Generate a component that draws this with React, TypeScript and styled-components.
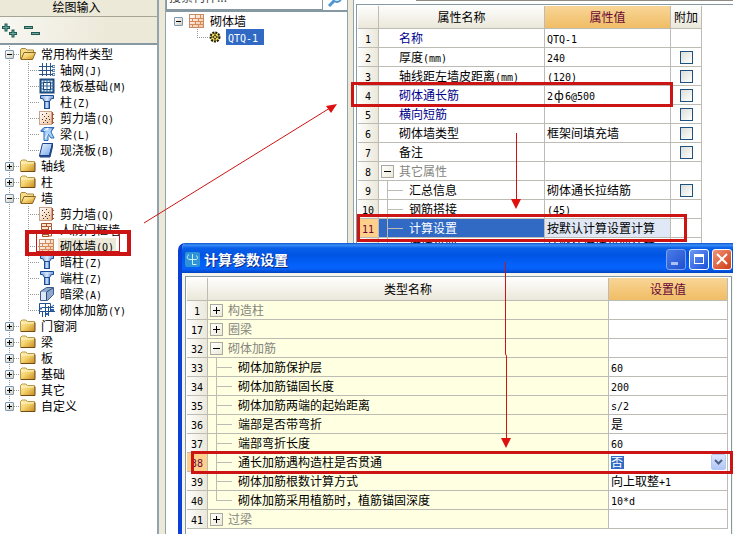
import React from 'react';
import styled, { createGlobalStyle, css } from 'styled-components';

const Global = createGlobalStyle`
  *, *::before, *::after { box-sizing: border-box; }
  body {
    margin: 0;
    overflow: hidden;
    background: #ece9d8;
    color: #000;
    font-family: "Noto Sans CJK SC", sans-serif;
    font-size: 12px;
    line-height: 16px;
  }
  button, input, select { font: inherit; margin: 0; padding: 0; }
`;

/* ---------- text ---------- */

const Half = styled.span`
  font-family: "DejaVu Sans Mono", monospace;
  font-size: 10px;
  line-height: 0;
`;

const Bar = styled.span`
  display: inline-block;
  width: 12px;
  text-align: center;
`;

function Txt({ children }: { children: string }) {
  return (
    <>
      {children.split(/([\x20-\x7e]+|ф)/).map((part, i) => {
        if (part === 'ф') return <Bar key={i}>ф</Bar>;
        return /^[\x20-\x7e]+$/.test(part) ? <Half key={i}>{part}</Half> : part;
      })}
    </>
  );
}

/* ---------- icons ---------- */

const Svg = ({ children, w = 16, h = 16 }: { children: React.ReactNode; w?: number; h?: number }) => (
  <svg width={w} height={h} viewBox={`0 0 ${w} ${h}`} aria-hidden="true">
    {children}
  </svg>
);

const Gradients = () => (
  <svg width="0" height="0" aria-hidden="true" display="block">
    <defs>
      <linearGradient id="gold" x1="0" y1="0" x2="1" y2="1">
        <stop offset="0" stopColor="#fff3b8" />
        <stop offset="0.5" stopColor="#f2cf6a" />
        <stop offset="1" stopColor="#c98a1c" />
      </linearGradient>
      <linearGradient id="steel" x1="0" y1="0" x2="1" y2="0">
        <stop offset="0" stopColor="#3f7fd0" />
        <stop offset="0.5" stopColor="#dcecff" />
        <stop offset="1" stopColor="#2b5cae" />
      </linearGradient>
      <linearGradient id="sheet" x1="0" y1="0" x2="1" y2="1">
        <stop offset="0" stopColor="#f2f8ff" />
        <stop offset="1" stopColor="#6fa4e6" />
      </linearGradient>
      <linearGradient id="clay" x1="0" y1="0" x2="1" y2="1">
        <stop offset="0" stopColor="#ffffff" />
        <stop offset="1" stopColor="#f3bf96" />
      </linearGradient>
    </defs>
  </svg>
);

const FolderIcon = () => (
  <Svg>
    <path d="M.5 3.500 2 2h4l1.500 1.500h7v10H.5z" fill="url(#gold)" stroke="#b99a4a" />
    <path d="M1 5h13" stroke="#fff6cf" />
    <path d="M1 13.500h14V4.500" fill="none" stroke="#6d4b12" />
  </Svg>
);
const FolderOpenIcon = () => (
  <Svg>
    <path d="M.5 13V4l1-1.500h4L7 4h6.500v3" fill="#f6dd8c" stroke="#a98536" />
    <path d="M1 13.500 4 6.500h11.500l-3 7z" fill="url(#gold)" stroke="#8a6420" />
  </Svg>
);
const GridIcon = () => (
  <Svg>
    <path d="M3.500 1v13M7.500 1v13M11.500 1v13M0 4.500h14M0 8.500h14M0 12.500h14" stroke="#2c5584" fill="none" />
    <path d="M13 3.500h3v2h-3M13 7.500h3v2h-3M13 11.500h3v2h-3" stroke="#5f86b0" fill="none" />
  </Svg>
);
const RaftIcon = () => (
  <Svg>
    <rect x="1.500" y="1.500" width="13" height="13" fill="#dcebfa" stroke="#1c4878" strokeWidth="2" />
    <rect x="4.500" y="4.500" width="7" height="7" fill="#fff" stroke="#1c4878" />
    <path d="M8 1v14M1 8h14M1 5h3M12 5h3M1 11h3M12 11h3M5 1v3M11 1v3M5 12v3M11 12v3" stroke="#2b639c" />
  </Svg>
);
const ColumnIcon = () => (
  <Svg>
    <path d="M1.500 1.500h13v3h-2l-2 3h-5l-2-3h-2z" fill="url(#steel)" stroke="#1d4a94" />
    <rect x="5.500" y="7.500" width="5" height="7" fill="url(#steel)" stroke="#1d4a94" />
    <path d="M2 3h12" stroke="#cfe2fb" />
  </Svg>
);
const ConcreteIcon = () => (
  <Svg>
    <rect x=".5" y="1.500" width="12" height="13" fill="url(#clay)" stroke="#c9a48c" />
    <path d="M3 4.500h1M7 3.500h1M5 6.500h1M9 6.500h1M3 9.500h1M6 10.500h1M10 9.500h1M4 12.500h1M8 12.500h1M7 8.500h1" stroke="#333" />
    <path d="M13.500 2v12M14 4.500h1M14 8.500h1M14 12.500h1" stroke="#a3542c" />
  </Svg>
);
const BeamIcon = () => (
  <Svg>
    <path d="M2 4.500 5 1.500h10l-3 4H2z" fill="url(#steel)" stroke="#2a6ab8" />
    <path d="M5 6v8.500h4V8l3 4h3L12 6l2-4" fill="#a9d2fa" stroke="#2a6ab8" />
    <path d="m5 5 4-3M6 12l3-4" stroke="#fff" />
  </Svg>
);
const SlabIcon = () => (
  <Svg>
    <path d="M3.500 1.500h10l-3 12h-10z" fill="url(#sheet)" stroke="#1f4590" />
    <path d="M13.500 1.500v3l-2.500 10.500H1l-.5-1.500h10z" fill="#2b5cae" stroke="#1f3f80" />
  </Svg>
);
const DoorWallIcon = () => (
  <Svg>
    <path d="M2.500 1.500h10v3h-3v10h-6v-4h2v-3h-3z" fill="#fbe3cd" stroke="#a5532c" />
    <path d="M3 4.500h6M6 7.500h4M7.500 1.500v3M4 12.500h5M12.500 5v9h-3" fill="none" stroke="#a5532c" />
  </Svg>
);
const BrickIcon = () => (
  <Svg>
    <rect x=".5" y="1.500" width="14" height="13" fill="url(#clay)" stroke="#c58a66" />
    <path d="M1 5.500h13M1 8.500h13M1 11.500h13M6.500 2v3M11.500 2v3M3.500 6v2M9.500 6v2M6.500 9v2M11.500 9v2M3.500 12v2M9.500 12v2" stroke="#d58a5c" />
  </Svg>
);
const HiddenBeamIcon = () => (
  <Svg>
    <path d="m1.500 5.500 6-4h7v7l-6 6h-7z" fill="#8fa9cc" stroke="#3c5c8c" />
    <path d="M2 6h5v8H2z" fill="#dfe9f6" />
    <path d="M7.500 6 14 2M7.500 6v8" stroke="#2f4e80" />
  </Svg>
);
const RebarIcon = () => (
  <Svg>
    <path d="M.5 12V1.500h11v8h-8V15M6.500 1v14M0 9.500h16M9.500 4v10M3 5.500h12M15 3l-4 3" fill="none" stroke="#23508e" />
    <path d="M1 6.500h2M7 12h2M12 8h3" stroke="#2b66b8" strokeWidth="2" />
  </Svg>
);
const GearIcon = () => (
  <Svg>
    <circle cx="8" cy="8" r="4.500" fill="#f4e05a" stroke="#1d1a08" strokeDasharray="2 1" strokeWidth="2" />
    <path d="M8 4v8M4 8h8" stroke="#3c3408" />
    <circle cx="8" cy="8" r="1.500" fill="#fff6a0" stroke="#3c3408" />
  </Svg>
);
const SearchIcon = () => (
  <Svg>
    <circle cx="10" cy="6" r="4" fill="#d8ecfb" stroke="#4f97d2" strokeWidth="2" />
    <path d="m7 9-5 5" stroke="#4f97d2" strokeWidth="3" />
  </Svg>
);

/* ---------- page frame ---------- */

const Screen = styled.main`
  position: relative;
  display: flex;
  height: 100vh;
  overflow: hidden;
`;

const Sidebar = styled.section`
  flex: 0 0 159px;
  display: flex;
  flex-direction: column;
  margin-right: 6px;
  border-right: 2px solid #91a4ae;
`;

const SideTitle = styled.h2`
  margin: 0;
  height: 17px;
  padding-right: 4px;
  border-bottom: 1px solid #a5a596;
  font-size: 12px;
  font-weight: 400;
  line-height: 13px;
  text-align: center;
`;

const Toolbar = styled.div`
  display: flex;
  align-items: center;
  gap: 6px;
  height: 26px;
  padding-left: 1px;
  background: linear-gradient(100deg, #f8f7f2, #ece9d8 70%);
`;

const ToolButton = styled.button`
  width: 17px;
  height: 17px;
  border: 0;
  background: none;
  line-height: 0;
`;

const Tree = styled.ul`
  flex: 1;
  margin: 0;
  padding: 1px 0 0;
  border-top: 2px solid #8699a3;
  background: #fff;
  list-style: none;
`;

const vDots = 'repeating-linear-gradient(#999 0 1px, transparent 1px 2px)';
const hDots = 'repeating-linear-gradient(90deg, #999 0 1px, transparent 1px 2px)';

const TreeRow = styled.li<{ $kind: 'folder' | 'leaf' | 'lastLeaf' | 'lastFolder' }>`
  display: flex;
  align-items: center;
  height: 16px;
  white-space: nowrap;
  background-repeat: no-repeat;
  ${p => (p.$kind === 'folder' || p.$kind === 'lastFolder') && css`
    padding-left: 5px;
    background-image: ${vDots}, ${hDots};
    background-position: 9px 0, 14px 8px;
    background-size: 1px ${p.$kind === 'folder' ? '100%' : '8px'}, 6px 1px;
  `}
  ${p => (p.$kind === 'leaf' || p.$kind === 'lastLeaf') && css`
    padding-left: 39px;
    background-image: ${vDots}, ${vDots}, ${hDots};
    background-position: 9px 0, 28px 0, 28px 8px;
    background-size: 1px 100%, 1px ${p.$kind === 'leaf' ? '100%' : '8px'}, 11px 1px;
  `}
`;

const ItemRow = styled.li<{ $child?: boolean }>`
  display: flex;
  align-items: center;
  height: 16px;
  padding-left: ${p => (p.$child ? 41 : 8)}px;
  background-repeat: no-repeat;
  ${p => p.$child && css`
    background-image: ${vDots}, ${hDots};
    background-position: 31px 0, 31px 8px;
    background-size: 1px 8px, 11px 1px;
  `}
`;

const Expander = styled.button`
  flex: none;
  width: 9px;
  height: 9px;
  margin-right: 6px;
  border: 1px solid #7b97b5;
  border-radius: 1px;
  background: linear-gradient(135deg, #fff, #d5cfc0);
  line-height: 0;
`;

const IconSlot = styled.span`
  flex: none;
  width: 16px;
  height: 16px;
  line-height: 0;
`;

const Label = styled.span<{ $tone?: 'soft' | 'selected' }>`
  height: 16px;
  margin-left: 3px;
  padding: 0 2px;
  line-height: 16px;
  ${p => p.$tone === 'soft' && css`background: #ece9d8;`}
  ${p => p.$tone === 'selected' && css`
    padding-right: 6px;
    background: #316ac5;
    color: #fff;
  `}
`;

function Expand({ open, name }: { open?: boolean; name: string }) {
  return (
    <Expander aria-label={name} aria-expanded={!!open}>
      <Svg w={7} h={7}>
        <path d={open ? 'M1 3.500h5' : 'M1 3.500h5M3.500 1v5'} stroke="#000" />
      </Svg>
    </Expander>
  );
}

const Items = styled.section`
  flex: 0 0 183px;
  display: flex;
  flex-direction: column;
  margin-right: 5px;
  border: solid #91a4ae;
  border-width: 0 1px;
  background: #fff;
`;

const SearchBar = styled.form`
  display: flex;
  align-items: flex-end;
  height: 10px;
  overflow: hidden;
`;

const SearchInput = styled.input`
  flex: 1;
  min-width: 0;
  height: 28px;
  padding: 0 2px;
  border: 1px solid #8699a3;
  background: #fff;
  &::placeholder { color: #444; opacity: 1; }
`;

const SearchButton = styled.button`
  width: 24px;
  height: 20px;
  border: 0;
  background: none;
  line-height: 0;
`;

/* ---------- property grids ---------- */

const PropertyPane = styled.section`
  flex: 1;
  padding: 4px 0 0 2px;
  border-left: 1px solid #91a4ae;
  background: linear-gradient(#8c8c84, #8c8c84) 62px 0 / 100% 1px no-repeat #fff;
`;

const Frame = styled.div<{ $closed?: boolean }>`
  flex: 1;
  padding: 1px ${p => (p.$closed ? 3 : 0)}px 0 1px;
  border: solid #8699a3;
  border-width: 1px ${p => (p.$closed ? 1 : 0)}px 0 1px;
  background: #fff;
`;

const Grid = styled.table<{ $fill?: boolean }>`
  width: ${p => (p.$fill ? '100%' : '344px')};
  border-spacing: 0;
  table-layout: fixed;
`;

const Col = styled.col<{ $w?: number }>`
  width: ${p => (p.$w ? `${p.$w}px` : 'auto')};
`;

const Head = styled.th<{ $hot?: boolean }>`
  height: 23px;
  padding: 0;
  border: solid #bcbcb4;
  border-width: 0 1px 1px 0;
  background: ${p => (p.$hot ? 'linear-gradient(#f8d596, #f0bd65)' : 'linear-gradient(#fdfdfb, #ebe8da)')};
  color: ${p => (p.$hot ? '#6a0836' : '#000')};
  font-weight: 400;
  line-height: 22px;
  white-space: nowrap;
`;

const RowNo = styled.th<{ $hot?: boolean }>`
  height: 19px;
  padding: 0;
  border: solid #bcbcb4;
  border-width: 0 1px 1px 0;
  background: ${p => (p.$hot ? '#ffcf8c' : 'linear-gradient(90deg, #fdfdfb, #ebe8da)')};
  color: ${p => (p.$hot ? '#6a0836' : '#000')};
  font-weight: 400;
  line-height: 18px;
`;

type Tone = 'plain' | 'cream' | 'active' | 'pale';
const fills: Record<Tone, string> = { plain: '#fff', cream: '#ffffe1', active: '#316ac5', pale: '#e1e8f5' };

const Cell = styled.td<{ $tone?: Tone; $ink?: string; $pad?: number }>`
  height: 19px;
  padding: 0 0 0 ${p => p.$pad ?? 2}px;
  border: solid #bcbcb4;
  border-width: 0 1px 1px 0;
  background: ${p => fills[p.$tone ?? 'plain']};
  color: ${p => p.$ink ?? '#000'};
  line-height: 18px;
  white-space: nowrap;
`;

const NameLine = styled.div`
  display: flex;
  align-items: center;
  height: 18px;
`;

const Lead = styled.span`
  display: flex;
  flex: 0 0 20px;
  padding-left: 2px;
`;

const Branch = styled.span<{ $last?: boolean }>`
  flex: 0 0 30px;
  height: 18px;
  background-image: linear-gradient(#bcbcb4, #bcbcb4), linear-gradient(#bcbcb4, #bcbcb4);
  background-repeat: no-repeat;
  background-position: 8px 0, 8px 9px;
  background-size: 1px ${p => (p.$last ? '9px' : '100%')}, 16px 1px;
`;

const GridToggle = styled.button`
  width: 13px;
  height: 13px;
  border: 1px solid #a9a9a0;
  background: linear-gradient(135deg, #fff, #ece9d8);
  line-height: 0;
`;

const Check = styled.input`
  display: block;
  appearance: none;
  width: 13px;
  height: 13px;
  margin: 0 auto;
  border: 1px solid #1c5180;
  background: linear-gradient(135deg, #dcdcd7, #fff);
`;

interface RowData {
  no: number;
  name: string;
  value?: string;
  kind?: 'open' | 'closed' | 'child' | 'last';
  blue?: boolean;
  check?: boolean;
  active?: boolean;
}

function Name({ row }: { row: RowData }) {
  const group = row.kind === 'open' || row.kind === 'closed';
  const child = row.kind === 'child' || row.kind === 'last';
  return (
    <NameLine>
      {child ? (
        <Branch $last={row.kind === 'last'} />
      ) : (
        <Lead>
          {group && (
            <GridToggle aria-label={row.name} aria-expanded={row.kind === 'open'}>
              <Svg w={11} h={11}>
                <path d={row.kind === 'open' ? 'M2 5.500h7' : 'M2 5.500h7M5.500 2v7'} stroke="#000" />
              </Svg>
            </GridToggle>
          )}
        </Lead>
      )}
      <span><Txt>{row.name}</Txt></span>
    </NameLine>
  );
}

const nameInk = (r: RowData) =>
  r.kind === 'open' || r.kind === 'closed' ? '#85857e' : r.blue ? '#00008c' : '#000';

/* ---------- dialog ---------- */

const Dialog = styled.section`
  position: absolute;
  inset: 243px 0 0 178px;
  display: flex;
  flex-direction: column;
  border-left: 4px solid #0a3fd8;
  border-radius: 7px 0 0 0;
  background: #f4f3ec;
  overflow: hidden;
`;

const TitleBar = styled.header`
  display: flex;
  align-items: center;
  flex: none;
  height: 30px;
  gap: 3px;
  padding: 2px 1px 0 2px;
  background: linear-gradient(#0a4fd0, #3d8ff5 2px, #0a5fe8 5px, #0054e3 12px, #0462fb 22px, #0560f8 26px, #0043c0);
`;

const Title = styled.h1`
  flex: 1;
  margin: 0 0 0 1px;
  color: #fff;
  font-size: 14px;
  font-weight: 700;
  line-height: 20px;
  text-shadow: 1px 1px #0a2a80;
`;

const CaptionButton = styled.button<{ $variant: 'dim' | 'blue' | 'red' }>`
  width: 20px;
  height: 21px;
  border: 1px solid ${p => (p.$variant === 'dim' ? '#7fa2ee' : '#fff')};
  border-radius: 3px;
  background: ${p => ({
    dim: 'linear-gradient(135deg, #4a7cea, #1f4fcd)',
    blue: 'linear-gradient(135deg, #6b98f4, #1c50d8)',
    red: 'linear-gradient(135deg, #f0957a, #cf3c14)',
  })[p.$variant]};
  line-height: 0;
`;

const DialogBody = styled.div`
  display: flex;
  flex: 1;
  padding: 3px 1px 0 3px;
`;

const Combo = styled.div`
  display: grid;
  grid-template-columns: 1fr 16px;
  align-items: center;
  height: 18px;
`;

const ComboSelect = styled.select`
  grid-area: 1 / 1 / 2 / 3;
  appearance: none;
  width: 100%;
  height: 18px;
  border: 0;
  border-radius: 0;
  background: linear-gradient(#316ac5, #316ac5) 0 3px / 13px 13px no-repeat;
  color: #fff;
  line-height: 18px;
  option { color: #000; }
`;

const ComboArrow = styled.span`
  grid-area: 1 / 2 / 2 / 3;
  width: 15px;
  height: 16px;
  border: 1px solid #b4c8f6;
  border-radius: 2px;
  background: linear-gradient(#dce6fd, #b2c6f6);
  line-height: 0;
  pointer-events: none;
`;

const Marks = styled.svg`
  position: absolute;
  top: 0;
  left: 0;
  pointer-events: none;
`;

/* ---------- data ---------- */

type Node = { label: string; icon?: () => React.JSX.Element; open?: boolean; soft?: boolean; last?: boolean };

const nodes: Node[] = [
  { label: '常用构件类型', open: true },
  { label: '轴网(J)', icon: GridIcon },
  { label: '筏板基础(M)', icon: RaftIcon },
  { label: '柱(Z)', icon: ColumnIcon },
  { label: '剪力墙(Q)', icon: ConcreteIcon },
  { label: '梁(L)', icon: BeamIcon },
  { label: '现浇板(B)', icon: SlabIcon, last: true },
  { label: '轴线' },
  { label: '柱' },
  { label: '墙', open: true },
  { label: '剪力墙(Q)', icon: ConcreteIcon },
  { label: '人防门框墙', icon: DoorWallIcon },
  { label: '砌体墙(Q)', icon: BrickIcon, soft: true },
  { label: '暗柱(Z)', icon: ColumnIcon },
  { label: '端柱(Z)', icon: ColumnIcon },
  { label: '暗梁(A)', icon: HiddenBeamIcon },
  { label: '砌体加筋(Y)', icon: RebarIcon, last: true },
  { label: '门窗洞' },
  { label: '梁' },
  { label: '板' },
  { label: '基础' },
  { label: '其它' },
  { label: '自定义', last: true },
];

const properties: RowData[] = [
  { no: 1, name: '名称', value: 'QTQ-1', blue: true },
  { no: 2, name: '厚度(mm)', value: '240', check: true },
  { no: 3, name: '轴线距左墙皮距离(mm)', value: '(120)', check: true },
  { no: 4, name: '砌体通长筋', value: '2ф6@500', blue: true, check: true },
  { no: 5, name: '横向短筋', blue: true, check: true },
  { no: 6, name: '砌体墙类型', value: '框架间填充墙', check: true },
  { no: 7, name: '备注', check: true },
  { no: 8, name: '其它属性', kind: 'open' },
  { no: 9, name: '汇总信息', value: '砌体通长拉结筋', kind: 'child', check: true },
  { no: 10, name: '钢筋搭接', value: '(45)', kind: 'child' },
  { no: 11, name: '计算设置', value: '按默认计算设置计算', kind: 'child', active: true },
  { no: 12, name: '搭接设置', value: '按默认搭接设置计算', kind: 'last' },
];

const settings: RowData[] = [
  { no: 1, name: '构造柱', kind: 'closed' },
  { no: 17, name: '圈梁', kind: 'closed' },
  { no: 32, name: '砌体加筋', kind: 'open' },
  { no: 33, name: '砌体加筋保护层', value: '60', kind: 'child' },
  { no: 34, name: '砌体加筋锚固长度', value: '200', kind: 'child' },
  { no: 35, name: '砌体加筋两端的起始距离', value: 's/2', kind: 'child' },
  { no: 36, name: '端部是否带弯折', value: '是', kind: 'child' },
  { no: 37, name: '端部弯折长度', value: '60', kind: 'child' },
  { no: 38, name: '通长加筋遇构造柱是否贯通', value: '否', kind: 'child', active: true },
  { no: 39, name: '砌体加筋根数计算方式', value: '向上取整+1', kind: 'child' },
  { no: 40, name: '砌体加筋采用植筋时，植筋锚固深度', value: '10*d', kind: 'last' },
  { no: 41, name: '过梁', kind: 'closed' },
];

export default function App() {
  return (
    <Screen>
      <Global />
      <Sidebar>
        <SideTitle>绘图输入</SideTitle>
        <Toolbar>
          <ToolButton aria-label="全部展开">
            <Svg w={17} h={17}>
              <path d="M1 5.500h8M5 1.500v8M8 11.500h8M12 7.500v8" stroke="#1f5a52" strokeWidth="3" />
              <path d="M2 5.500h6M5 2.500v6M9 11.500h6M12 8.500v6" stroke="#6fa79c" />
            </Svg>
          </ToolButton>
          <ToolButton aria-label="全部折叠">
            <Svg w={17} h={17}>
              <path d="M0 5.500h9M7 11.500h9" stroke="#1f5a52" strokeWidth="3" />
              <path d="M1 5.500h7M8 11.500h7" stroke="#6fa79c" />
            </Svg>
          </ToolButton>
        </Toolbar>
        <Tree>
          {nodes.map((n, i) => {
            const Icon = n.icon ?? (n.open ? FolderOpenIcon : FolderIcon);
            const kind = n.icon ? (n.last ? 'lastLeaf' : 'leaf') : n.last ? 'lastFolder' : 'folder';
            return (
              <TreeRow key={i} $kind={kind}>
                {!n.icon && <Expand open={n.open} name={n.label} />}
                <IconSlot><Icon /></IconSlot>
                <Label $tone={n.soft ? 'soft' : undefined}><Txt>{n.label}</Txt></Label>
              </TreeRow>
            );
          })}
        </Tree>
      </Sidebar>

      <Items>
        <SearchBar>
          <SearchInput aria-label="搜索构件" placeholder="搜索构件..." />
          <SearchButton type="button" aria-label="搜索"><SearchIcon /></SearchButton>
        </SearchBar>
        <Tree>
          <ItemRow>
            <Expand open name="砌体墙" />
            <IconSlot><BrickIcon /></IconSlot>
            <Label>砌体墙</Label>
          </ItemRow>
          <ItemRow $child>
            <IconSlot><GearIcon /></IconSlot>
            <Label $tone="selected"><Txt>QTQ-1</Txt></Label>
          </ItemRow>
        </Tree>
      </Items>

      <PropertyPane>
        <Frame>
          <Grid>
            <colgroup><Col $w={21} /><Col $w={166} /><Col $w={126} /><Col $w={31} /></colgroup>
            <thead>
              <tr><Head /><Head>属性名称</Head><Head $hot>属性值</Head><Head>附加</Head></tr>
            </thead>
            <tbody>
              {properties.map(r => (
                <tr key={r.no}>
                  <RowNo scope="row" $hot={r.active}><Txt>{String(r.no)}</Txt></RowNo>
                  <Cell $pad={0} $tone={r.active ? 'active' : 'plain'} $ink={r.active ? '#fff' : nameInk(r)}>
                    <Name row={r} />
                  </Cell>
                  <Cell $tone={r.active ? 'pale' : 'plain'}><Txt>{r.value ?? ''}</Txt></Cell>
                  <Cell $pad={0}>{r.check && <Check type="checkbox" aria-label={`${r.name} 附加`} />}</Cell>
                </tr>
              ))}
            </tbody>
          </Grid>
        </Frame>
      </PropertyPane>

      <Dialog role="dialog" aria-label="计算参数设置">
        <TitleBar>
          <IconSlot>
            <Svg>
              <rect x="1" y="1" width="15" height="15" rx="2" fill="#2f93d8" />
              <path d="M8.500 3v10.500M5 3.500c-3 2-2 5 1 5h6c2 0 2-3 0-4M8.500 13.500h4" fill="none" stroke="#c9f1fb" />
            </Svg>
          </IconSlot>
          <Title>计算参数设置</Title>
          <CaptionButton $variant="dim" aria-label="最小化">
            <Svg w={18} h={18}><path d="M4 13.500h7" stroke="#a9c1f6" strokeWidth="3" /></Svg>
          </CaptionButton>
          <CaptionButton $variant="blue" aria-label="最大化">
            <Svg w={18} h={18}>
              <rect x="4.500" y="4.500" width="9" height="9" fill="none" stroke="#fff" />
              <path d="M4 5.500h10" stroke="#fff" strokeWidth="3" />
            </Svg>
          </CaptionButton>
          <CaptionButton $variant="red" aria-label="关闭">
            <Svg w={18} h={18}><path d="m4 4 10 10M14 4 4 14" stroke="#fff" strokeWidth="2" /></Svg>
          </CaptionButton>
        </TitleBar>
        <DialogBody>
          <Frame $closed>
            <Grid $fill>
              <colgroup><Col $w={21} /><Col /><Col $w={119} /></colgroup>
              <thead>
                <tr><Head /><Head>类型名称</Head><Head $hot>设置值</Head></tr>
              </thead>
              <tbody>
                {settings.map(r => (
                  <tr key={r.no}>
                    <RowNo scope="row" $hot={r.active}><Txt>{String(r.no)}</Txt></RowNo>
                    <Cell $pad={0} $tone="cream" $ink={nameInk(r)}><Name row={r} /></Cell>
                    <Cell>
                      {r.active ? (
                        <Combo>
                          <ComboSelect aria-label={r.name} defaultValue="否">
                            <option>是</option>
                            <option>否</option>
                          </ComboSelect>
                          <ComboArrow>
                            <Svg w={13} h={14}><path d="m3 5 3.500 3.500L10 5" fill="none" stroke="#4d6185" strokeWidth="2" /></Svg>
                          </ComboArrow>
                        </Combo>
                      ) : (
                        <Txt>{r.value ?? ''}</Txt>
                      )}
                    </Cell>
                  </tr>
                ))}
              </tbody>
            </Grid>
          </Frame>
        </DialogBody>
      </Dialog>

      <Marks width="733" height="534" viewBox="0 0 733 534" aria-hidden="true">
        <g fill="none" stroke="#cc1414">
          <rect x="36.500" y="232.500" width="83" height="19" />
          <rect x="27" y="232" width="102" height="22" strokeWidth="4" />
          <rect x="352.500" y="83.500" width="319" height="22" strokeWidth="3" />
          <rect x="358.500" y="215.500" width="327" height="25" strokeWidth="3" />
          <rect x="192.500" y="452.500" width="539" height="20" strokeWidth="3" />
          <path d="M144 223 330 108M516.500 133v68M505.500 262v92l1 2v84" />
        </g>
        <path d="m337 104-11 2 5 7zM511 199h10l-5 10zM501 438h10l-5 10z" fill="#e01010" />
      </Marks>
      <Gradients />
    </Screen>
  );
}
